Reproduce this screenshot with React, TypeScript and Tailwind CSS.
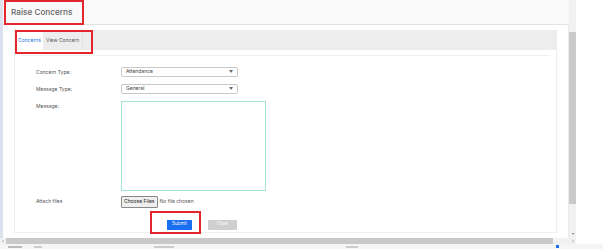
import React from "react";

const font = { fontFamily: "Inter, 'Noto Sans', sans-serif" };

const Select: React.FC<{ value: string }> = ({ value }) => (
  <div className="flex h-[10px] w-[117px] items-center justify-between rounded-[2px] border border-[#c9c9c9] bg-white pl-[4px] pr-[4px] text-[5px] text-[#444]">
    <span>{value}</span>
    <span className="text-[4px] text-[#666]">▼</span>
  </div>
);

const FormRow: React.FC<{ label: string; children: React.ReactNode; className?: string }> = ({
  label,
  children,
  className,
}) => (
  <div className={`flex items-start ${className ?? ""}`}>
    <div className="w-[85px] shrink-0 pt-[2px] text-[5px] text-[#555]">{label}</div>
    {children}
  </div>
);

export default function App() {
  return (
    <div className="relative flex h-[249px] w-[603px] flex-col overflow-hidden bg-white" style={font}>
      <div className="flex h-[238px]">
        <div className="w-[3px] shrink-0 bg-[#dbe2ee]" />
        <div className="flex w-[566px] shrink-0 flex-col">
          <div className="flex h-[25px] shrink-0 items-center border-b border-[#e2e2e2] bg-[#f9f9f9] pl-[8px]">
            <h1 className="text-[8.2px] font-medium text-[#666]">Raise Concerns</h1>
          </div>
          <div className="flex-1 border-r border-[#ececec] px-[11px] pt-[5px]">
            <div className="h-[203px] border border-[#efefef] bg-white">
              <div className="flex h-[19px] items-stretch bg-[#ededed] px-[1px]">
                <div className="flex items-center bg-white px-[2px] text-[5px] text-[#1a73e8]">Concerns</div>
                <div className="flex items-center border-r border-[#e2e2e2] px-[3px] text-[5px] text-[#555]">
                  View Concern
                </div>
              </div>
              <div className="mx-[6px] mt-[5px] border-t border-[#f0f0f0]" />
              <div className="flex flex-col pl-[21px] pt-[11px]">
                <FormRow label="Concern Type:">
                  <Select value="Attendance" />
                </FormRow>
                <FormRow label="Message Type:" className="mt-[7px]">
                  <Select value="General" />
                </FormRow>
                <FormRow label="Message:" className="mt-[7px]">
                  <textarea className="h-[90px] w-[145px] resize-none border border-[#a6e3d8] outline-none" />
                </FormRow>
                <FormRow label="Attach files" className="mt-[5px]">
                  <div className="flex items-center gap-[2px] text-[5px] text-[#555]">
                    <span className="rounded-[1px] border border-[#888] bg-[#efefef] px-[2px] py-[1px] text-[#222]">
                      Choose Files
                    </span>
                    <span>No file chosen</span>
                  </div>
                </FormRow>
                <div className="mt-[12px] flex gap-[16px] pl-[131px]">
                  <button className="h-[10px] w-[25px] bg-[#1a6ef0] text-[4.5px] text-white">Submit</button>
                  <button className="h-[10px] w-[29px] bg-[#cfcfcf] text-[4.5px] text-white">Clear</button>
                </div>
              </div>
            </div>
          </div>
        </div>
        <div className="flex w-[7px] shrink-0 flex-col bg-[#f1f1f1]">
          <div className="h-[32px]" />
          <div className="h-[172px] bg-[#c9c9c9]" />
          <div className="flex-1" />
          <div className="pb-[2px] text-center text-[4px] leading-none text-[#777]">▾</div>
        </div>
        <div className="flex-1" />
      </div>
      <div className="flex h-[6px] w-[576px] items-center bg-[#f1f1f1]">
        <span className="w-[6px] text-center text-[5px] leading-none text-[#666]">‹</span>
        <div className="h-full w-[547px] bg-[#c9c9c9]" />
        <div className="flex-1" />
        <span className="w-[6px] text-center text-[5px] leading-none text-[#666]">›</span>
      </div>
      <div className="flex h-[5px] items-center gap-[12px] bg-[#f5f5f5] pl-[8px]">
        <div className="h-[2px] w-[14px] bg-[#bbb]" />
        <div className="h-[2px] w-[8px] bg-[#ccc]" />
        <div className="ml-[100px] h-[2px] w-[20px] bg-[#ccc]" />
        <div className="ml-[160px] h-[2px] w-[12px] bg-[#ccc]" />
        <div className="ml-[186px] h-[3px] w-[3px] bg-[#1a6ef0]" />
      </div>

      <div className="pointer-events-none absolute left-[4px] top-0 h-[25px] w-[80px] border-2 border-[#e3262e]" />
      <div className="pointer-events-none absolute left-[15px] top-[30px] h-[24px] w-[78px] border-2 border-[#e3262e]" />
      <div className="pointer-events-none absolute left-[150px] top-[211px] h-[23px] w-[51px] border-2 border-[#e3262e]" />
    </div>
  );
}
